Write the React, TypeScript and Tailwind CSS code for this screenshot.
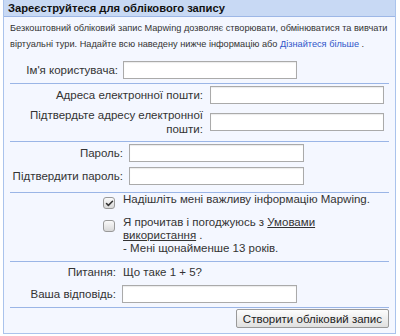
import { Check } from 'lucide-react';

const labelCls = 'text-right text-[11.5px] leading-[14px] text-[#333]';
const inputCls = 'h-[18px] border border-[#aaa] bg-white shadow-[inset_0_1px_1px_rgba(0,0,0,0.08)]';

function Sep() {
  return <div className="h-px bg-[#9ab5e6]" />;
}

export default function App() {
  return (
    <div className="bg-white w-[400px] h-[336px] font-['Liberation_Sans',Arial,sans-serif]">
      <div className="ml-[3px] w-[393px] h-[334px] border border-[#aac3ec] border-t-0 bg-[#f4f7ff]">
        {/* Header */}
        <div className="h-[17px] bg-[#c8d9f4] border-b border-[#9db7e6] pl-[4px] text-[11.2px] leading-[16px] font-bold text-[#111]">
          Зареєструйтеся для облікового запису
        </div>

        <div className="px-[6px]">
          {/* Intro */}
          <p className="pt-[3px] text-[9.2px] leading-[16px] text-[#333] whitespace-nowrap">
            Безкоштовний обліковий запис Mapwing дозволяє створювати, обмінюватися та вивчати
            <br />
            віртуальні тури. Надайте всю наведену нижче інформацію або{' '}
            <a className="text-[#2f55c9]">Дізнайтеся більше</a> .
          </p>

          {/* Username */}
          <div className="flex items-center h-[18px] mt-[9px]">
            <div className={`w-[108px] ${labelCls}`}>Ім'я користувача:</div>
            <div className={`ml-[5px] w-[174px] ${inputCls}`} />
          </div>
          <div className="h-[4px]" />
          <Sep />

          {/* Email */}
          <div className="flex items-center mt-[2px] h-[18px]">
            <div className={`w-[193px] ${labelCls}`}>Адреса електронної пошти:</div>
            <div className={`ml-[7px] w-[174px] ${inputCls}`} />
          </div>
          <div className="flex items-center mt-[9px] h-[18px]">
            <div className={`w-[193px] ${labelCls} leading-[13px]`}>
              Підтвердьте адресу електронної
              <br />
              пошти:
            </div>
            <div className={`ml-[7px] w-[174px] ${inputCls}`} />
          </div>
          <div className="h-[10px]" />
          <Sep />

          {/* Password */}
          <div className="flex items-center mt-[2px] h-[18px]">
            <div className={`w-[113px] ${labelCls}`}>Пароль:</div>
            <div className={`ml-[6px] w-[175px] ${inputCls}`} />
          </div>
          <div className="flex items-center mt-[5px] h-[18px]">
            <div className={`w-[113px] ${labelCls}`}>Підтвердити пароль:</div>
            <div className={`ml-[6px] w-[175px] ${inputCls}`} />
          </div>
          <div className="h-[7px]" />
          <Sep />

          {/* Checkboxes */}
          <div className="flex items-start">
            <div className="ml-[93px] mt-[4px] w-[12px] h-[12px] rounded-[3px] border border-[#999] bg-gradient-to-b from-[#fafafa] to-[#d8d8d8] flex items-center justify-center">
              <Check className="w-[9px] h-[9px] text-[#333]" strokeWidth={4} />
            </div>
            <div className="ml-[8px] text-[11.5px] leading-[13px] text-[#333]">
              Надішліть мені важливу інформацію Mapwing.
            </div>
          </div>
          <div className="flex items-start mt-[7px]">
            <div className="ml-[93px] mt-[4px] w-[12px] h-[12px] rounded-[3px] border border-[#999] bg-gradient-to-b from-[#fafafa] to-[#d8d8d8]" />
            <div className="ml-[8px] text-[11.5px] leading-[13px] text-[#333]">
              Я прочитав і погоджуюсь з <span className="underline">Умовами</span>
              <br />
              <span className="underline">використання</span> .
              <br />
              - Мені щонайменше 13 років.
            </div>
          </div>
          <div className="h-[6px]" />
          <Sep />

          {/* Question */}
          <div className="flex items-center mt-[1px] h-[18px]">
            <div className={`w-[106px] ${labelCls}`}>Питання:</div>
            <div className="ml-[7px] text-[11.5px] leading-[14px] text-[#333]">Що таке 1 + 5?</div>
          </div>
          <div className="flex items-center mt-[4px] h-[18px]">
            <div className={`w-[106px] ${labelCls}`}>Ваша відповідь:</div>
            <div className={`ml-[6px] w-[175px] ${inputCls}`} />
          </div>
          <div className="h-[4px]" />
          <Sep />

          {/* Submit */}
          <div className="flex justify-end mt-[1px]">
            <button className="h-[19px] px-[6px] border border-[#999] rounded-[2px] bg-gradient-to-b from-[#fdfdfd] to-[#e0e0e0] text-[11.5px] leading-[14px] text-[#222]">
              Створити обліковий запис
            </button>
          </div>
        </div>
      </div>
    </div>
  );
}
